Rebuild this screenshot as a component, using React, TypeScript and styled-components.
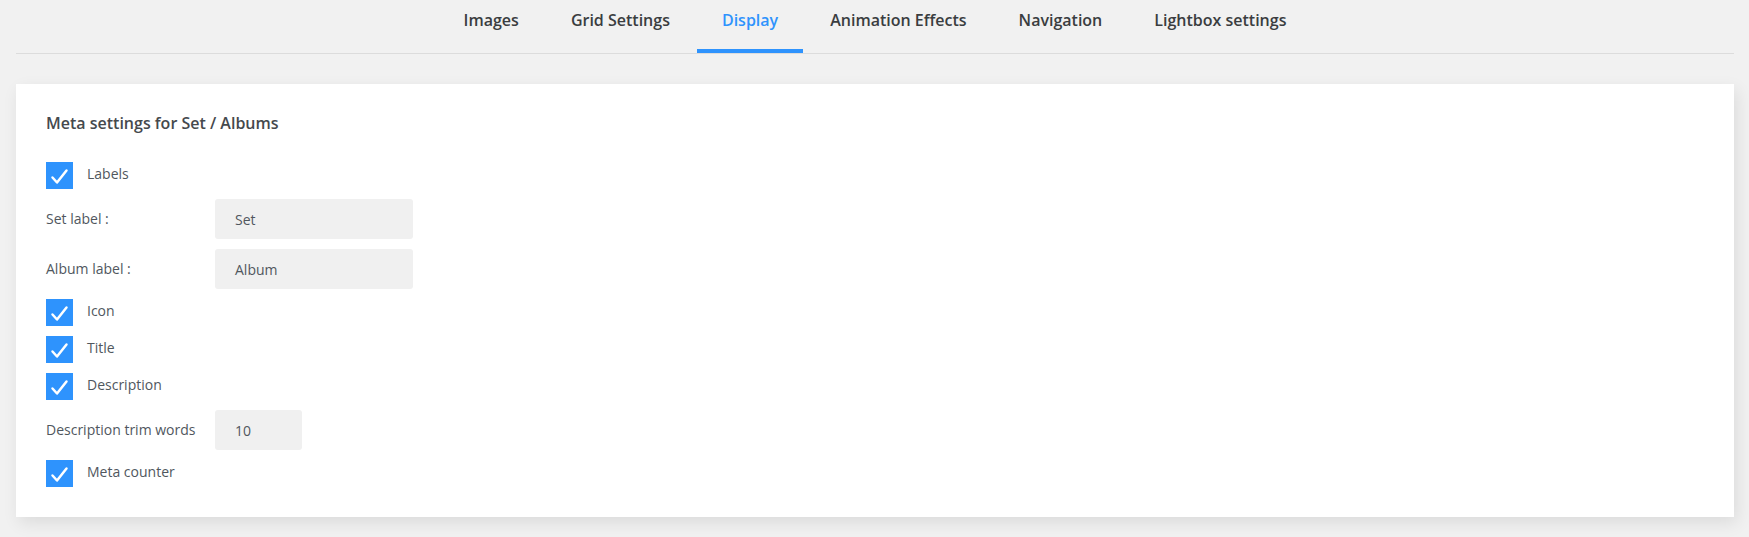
import React from "react";
import styled, { createGlobalStyle } from "styled-components";

const GlobalStyle = createGlobalStyle`
  html, body {
    margin: 0;
    padding: 0;
    background: #f1f1f1;
    font-family: "Open Sans", "Noto Sans", sans-serif;
  }
  * { box-sizing: border-box; }
`;

const BLUE = "#2e93fd";

const Page = styled.div`
  padding: 0 15px 20px 16px;
`;

const TabBar = styled.nav`
  display: flex;
  justify-content: center;
  border-bottom: 1px solid #dcdcdc;
`;

const Tab = styled.a<{ $active?: boolean }>`
  display: block;
  padding: 8px 25px 17px;
  font-size: 16px;
  line-height: 24px;
  font-weight: 600;
  color: ${(p) => (p.$active ? BLUE : "#3a3d40")};
  border-bottom: 4px solid ${(p) => (p.$active ? BLUE : "transparent")};
  text-decoration: none;
  cursor: pointer;
  margin: 0 1px;
`;

const Card = styled.section`
  margin-top: 30px;
  background: #fff;
  padding: 27px 30px 30px;
  box-shadow: 3px 6px 16px rgba(0, 0, 0, 0.09);
`;

const Heading = styled.h3`
  margin: 0 0 27px;
  font-size: 16px;
  line-height: 24px;
  font-weight: 600;
  color: #45494d;
`;

const Fields = styled.div`
  display: flex;
  flex-direction: column;
  gap: 10px;
`;

const CheckRow = styled.label`
  display: flex;
  align-items: center;
  gap: 14px;
  font-size: 14px;
  line-height: 20px;
  color: #50575e;
`;

const CheckText = styled.span`
  padding-bottom: 4px;
`;

const Box = styled.span`
  width: 27px;
  height: 27px;
  background: ${BLUE};
  display: flex;
  align-items: center;
  justify-content: center;
  flex-shrink: 0;
`;

const InputRow = styled.div`
  display: flex;
  align-items: center;
`;

const RowLabel = styled.span`
  width: 169px;
  font-size: 14px;
  line-height: 20px;
  color: #50575e;
`;

const Input = styled.div<{ $w: number }>`
  width: ${(p) => p.$w}px;
  height: 40px;
  background: #f0f0f0;
  border-radius: 3px;
  padding-left: 20px;
  display: flex;
  align-items: center;
  font-size: 14px;
  color: #50575e;
`;

const Check = () => (
  <svg width="27" height="27" viewBox="0 0 27 27" aria-hidden>
    <path
      d="M6.5 15.5 L11 20.5 L20.5 8.5"
      fill="none"
      stroke="#fff"
      strokeWidth="2.5"
      strokeLinecap="round"
      strokeLinejoin="round"
    />
  </svg>
);

const CheckItem = ({ label }: { label: string }) => (
  <CheckRow>
    <Box>
      <Check />
    </Box>
    <CheckText>{label}</CheckText>
  </CheckRow>
);

const TextField = ({ label, value, w }: { label: string; value: string; w: number }) => (
  <InputRow>
    <RowLabel>{label}</RowLabel>
    <Input $w={w}>{value}</Input>
  </InputRow>
);

const tabs = ["Images", "Grid Settings", "Display", "Animation Effects", "Navigation", "Lightbox settings"];

export default function App() {
  return (
    <>
      <GlobalStyle />
      <Page>
        <TabBar>
          {tabs.map((t) => (
            <Tab key={t} $active={t === "Display"}>
              {t}
            </Tab>
          ))}
        </TabBar>
        <Card>
          <Heading>Meta settings for Set / Albums</Heading>
          <Fields>
            <CheckItem label="Labels" />
            <TextField label="Set label :" value="Set" w={198} />
            <TextField label="Album label :" value="Album" w={198} />
            <CheckItem label="Icon" />
            <CheckItem label="Title" />
            <CheckItem label="Description" />
            <TextField label="Description trim words" value="10" w={87} />
            <CheckItem label="Meta counter" />
          </Fields>
        </Card>
      </Page>
    </>
  );
}
